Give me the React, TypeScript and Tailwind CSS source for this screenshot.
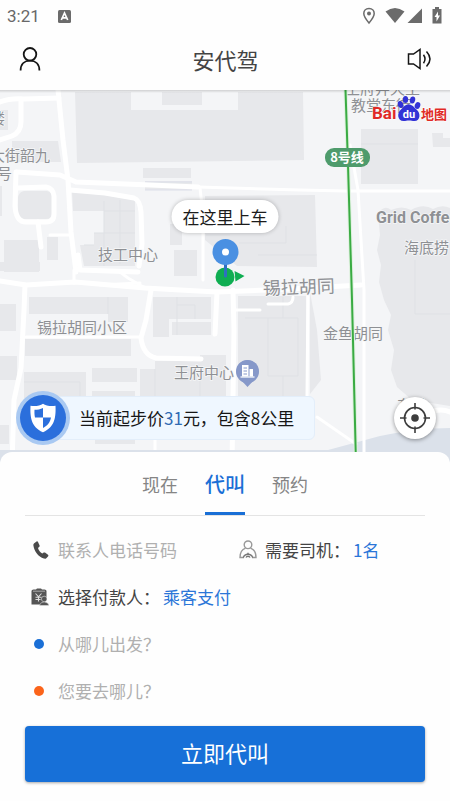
import { useState } from "react";

const tabs = ["现在", "代叫", "预约"];

const blocks = [
  "M75 92H131V110H238V92H303L304 160L77 163Z",
  "M162 92H202V105H162Z",
  "M0 110H8V130H0Z",
  "M12 141H58L61 162H12Z",
  "M143 168H191V178H143Z",
  "M145 181H192V190H145Z",
  "M24 191H47Q52 192 52 197V213Q52 219 46 219H24Q18 218 18 212V197Q19 192 24 191Z",
  "M4 240H39V272H4Z",
  "M47 237H58V260H47Z",
  "M0 186H2V216H0Z",
  "M72 192L104 195L135 200V266H84L80 245H94V233H104V211H73Z",
  "M170 224H182V245H170Z",
  "M174 250H197V276H174Z",
  "M205 196L315 195L317 267L237 266L205 240Z",
  "M361 129H418V184H361Z",
  "M432 133H443V138H450V147H433Z",
  "M0 262H40V271H0Z",
  "M29 297H128V322H108V314H29Z",
  "M25 339H131V356H25Z",
  "M0 304H16V331H0Z",
  "M0 356H17V380H0Z",
  "M24 372H86V398H24Z",
  "M92 368H137V382H92Z",
  "M92 391H135V400H92Z",
  "M0 425H9V444H0Z",
  "M95 440H135V444H95Z",
  "M153 297H211V319H169V337H153Z",
  "M172 322H211V335H172Z",
  "M140 369H155V361H200V355H226V396H140Z",
  "M238 296H306V396H238Z",
  "M310 292L317 330L321 380L310 394Z",
  "M378 214Q384 204 391 210Q402 205 411 210Q423 203 433 209Q442 204 450 208V406L412 400L397 387L391 370L394 350L388 330L391 315L384 300L379 282L381 265L377 250L380 235Z",
];

const outlines = [
  "M104 201V266M120 200V264M94 233H135M104 211H135M84 245H94",
  "M239 243H286V226M206 235H230M258 255H317",
  "M268 318H298V376H268ZM283 296V318M283 376V396M245 318H268",
  "M108 297V314M177 297V335M177 305H195V319M178 370H200V396M155 369V396",
  "M415 260V314H450M361 144H418M24 382H80V398",
];

const wideRoads = [
  "M0 102Q10 98 24 99L59 98",
  "M58 90L63 140L68 180L71 232L76 272",
  "M21 99V122Q21 132 12 136L0 140",
  "M17 172L60 175L76 182L150 185L198 187",
  "M16 172L15 206Q16 222 26 222H46Q54 222 54 214V196Q53 188 46 187L18 188",
  "M38 222L41 247",
  "M70 190L105 193L134 198Q140 200 141 212L142 244L139 266",
  "M78 255L80 270L138 272",
  "M0 281L26 285L75 282L145 288L180 290L217 292L290 289L361 285",
  "M25 285L24 310L21 368L14 400L12 464",
  "M151 290L146 320L141 338Q143 355 156 358L201 359",
  "M217 292L215 334",
  "M233 290L234 330L232 464",
];

const thinRoads = [
  "M198 187L300 190L345 191H450",
  "M50 235H70",
  "M200 188L203 215V280",
  "M350 145L358 190L361 240L364 290V464",
  "M26 337H141",
  "M234 310H260M268 304H288Q293 303 293 297",
  "M308 291L307 396",
  "M317 417L356 444",
  "M74 270V283M120 272L128 278L145 288M100 285L140 283",
  "M155 430V464",
];

const labelClass =
  "fill-[#8e9094] stroke-[#f6f7f8] [paint-order:stroke] font-['Noto_Sans_CJK_SC',sans-serif]";

function CityMap() {
  return (
    <svg
      className="absolute inset-0 h-full w-full"
      viewBox="0 90 450 374"
      preserveAspectRatio="xMidYMin slice"
      role="img"
      aria-label="地图"
    >
      <rect x="0" y="90" width="450" height="374" fill="#f4f5f7" />
      {blocks.map((d) => (
        <path key={d} d={d} fill="#e7e8eb" />
      ))}
      {outlines.map((d) => (
        <path key={d} d={d} fill="none" stroke="#dfe1e5" strokeWidth="1" />
      ))}
      <path d="M145 182H192M145 190H192" stroke="#dcdfea" />
      <path d="M0 450H328L380 436Q420 428 450 428V464H0Z" fill="#dbe1ea" />
      <g fill="none" stroke="#fff" strokeLinecap="round" strokeLinejoin="round">
        {wideRoads.map((d) => (
          <path key={d} d={d} strokeWidth="5" />
        ))}
        {thinRoads.map((d) => (
          <path key={d} d={d} strokeWidth="3" />
        ))}
        <path d="M430 412Q442 408 450 412" strokeWidth="5" />
      </g>
      <path d="M0 450H328V464H0Z" fill="#dbe1ea" />

      <g className={labelClass} fontSize="15" strokeWidth="1.500">
        <text x="-10" y="124">楼</text>
        <text x="-10" y="161">大街韶九</text>
        <text x="-3" y="179">号</text>
        <text x="98" y="260">技工中心</text>
        <text x="37" y="333">锡拉胡同小区</text>
        <text x="174" y="378">王府中心</text>
        <text x="323" y="339">金鱼胡同</text>
        <text x="404" y="253">海底捞</text>
        <text x="345" y="94">王府井天主</text>
        <text x="351" y="111">教堂东街</text>
        <text x="397" y="411">东单</text>
        <text x="263" y="295" fontSize="18" transform="rotate(-2 263 295)">
          锡拉胡同
        </text>
        <text x="376" y="223" fontSize="16" className="font-[Roboto,sans-serif] font-bold">
          Grid Coffee
        </text>
      </g>

      <path d="M345.500 90L348 165L352 300L356 464" fill="none" stroke="#dff1df" strokeWidth="4" />
      <path d="M345.500 90L348 165L352 300L356 464" fill="none" stroke="#3aab43" strokeWidth="2" />
      <rect x="325" y="148" width="45" height="19" rx="9" fill="#4e9b6c" />
      <text
        x="347"
        y="162"
        fontSize="13"
        textAnchor="middle"
        className="fill-white font-['Noto_Sans_CJK_SC',sans-serif] font-bold"
      >
        8号线
      </text>

      {/* 王府中心 office marker */}
      <path d="M247.500 387L241 380A11 11 0 1 1 254 380Z" fill="#8698c9" />
      <circle cx="247.500" cy="371.500" r="11.500" fill="#8698c9" />
      <path d="M242 365h6.500v11.500H242zM249.500 369h3.500v7.500H249.500z" fill="#fff" />
      <path d="M240.500 377h14" stroke="#fff" strokeWidth="1.200" />
      <path d="M243.500 368h3.500M243.500 371h3.500M243.500 374h3.500" stroke="#8698c9" />

      {/* Baidu map logo */}
      <g className="font-bold" stroke="#fff" strokeWidth="1" paintOrder="stroke">
        <text x="372" y="119" fontSize="17" className="fill-[#e02a26] font-[Roboto,sans-serif]">
          Bai
        </text>
        <text x="421" y="119" fontSize="13" className="fill-[#e02a26] font-['Noto_Sans_CJK_SC',sans-serif]">
          地图
        </text>
        <g fill="#3232d6" stroke="none">
          <path
            d="M408.500 104.500C404.500 104.500 404 107 401 109.500C396.500 113 397.500 121 403.500 121C406 121 406.500 120.500 409 120.500C411.500 120.500 412 121 414.500 121C420.500 121 421 113 416.500 109.500C413.500 107 412.500 104.500 408.500 104.500Z"
          />
          <ellipse cx="400.500" cy="104.500" rx="2.700" ry="3.500" transform="rotate(-15 400.500 104.500)" />
          <ellipse cx="405.500" cy="99.500" rx="2.700" ry="3.500" />
          <ellipse cx="412.500" cy="100" rx="2.700" ry="3.500" transform="rotate(12 412.500 100)" />
          <ellipse cx="417.500" cy="105.500" rx="2.700" ry="3.500" transform="rotate(20 417.500 105.500)" />
        </g>
        <text
          x="409"
          y="118"
          fontSize="11"
          textAnchor="middle"
          stroke="none"
          className="fill-white font-[Roboto,sans-serif]"
        >
          du
        </text>
      </g>
    </svg>
  );
}

function StatusBar() {
  return (
    <div className="flex h-8 items-center justify-between pr-2 pl-[7px] text-[#686868]">
      <div className="flex items-center gap-[18px]">
        <span className="font-[Roboto,sans-serif] text-[17px] leading-5">3:21</span>
        <svg width="13" height="13" viewBox="0 0 13 13" aria-hidden="true">
          <rect width="13" height="13" rx="1.500" fill="#6b6b6b" />
          <path d="M3.300 10L6.500 3L9.700 10M4.500 7.800H8.500" fill="none" stroke="#fff" strokeWidth="1.700" />
        </svg>
      </div>
      <svg width="80" height="18" viewBox="362 6 80 18" aria-hidden="true">
        <path
          d="M369 7.500C365.600 7.500 363.800 9.900 363.800 12.600C363.800 16 369 22 369 22S374.200 16 374.200 12.600C374.200 9.900 372.400 7.500 369 7.500Z"
          fill="none"
          stroke="#6b6b6b"
          strokeWidth="1.500"
        />
        <circle cx="369" cy="12.500" r="2" fill="#6b6b6b" />
        <path d="M385.500 10.500Q395 3.500 404.500 10.500L395 22Z" fill="#6b6b6b" />
        <path d="M422 7.500V22H407.500Z" fill="#6b6b6b" />
        <path d="M435 6h4v2h2.500v14.500h-9V8h2.500Z" fill="#6b6b6b" />
        <path d="M438 10.500L434.500 16H436.500V20.500L440 14.500H438Z" fill="#fff" />
      </svg>
    </div>
  );
}

function Header() {
  return (
    <header className="grid h-[58px] grid-cols-[1fr_auto_1fr] items-center pr-[17px] pb-1 pl-[18px]">
      <button type="button" aria-label="个人中心" className="justify-self-start">
        <svg width="24" height="26" viewBox="0 0 24 26" fill="none" stroke="#151515" strokeWidth="1.800" aria-hidden="true">
          <circle cx="12" cy="8.300" r="6.300" />
          <path d="M2.600 24.500C2.600 18 6.600 14.600 12 14.600S21.400 18 21.400 24.500" />
        </svg>
      </button>
      <h1 className="text-[22px] leading-8 text-[#444]">安代驾</h1>
      <button type="button" aria-label="语音播报" className="justify-self-end">
        <svg width="26" height="24" viewBox="0 0 26 24" fill="none" stroke="#151515" strokeWidth="1.500" aria-hidden="true">
          <path d="M1.500 7V17H6.500L13 21.500V2.500L6.500 7Z" />
          <path d="M16.500 7.800Q19.500 12 16.500 16.200M19.500 4.500Q26.500 12 19.500 19.500" />
        </svg>
      </button>
    </header>
  );
}

function PickupMarker() {
  return (
    <div className="absolute top-[110px] left-1/2 flex -translate-x-1/2 flex-col items-center">
      <div className="rounded-full bg-white px-[11px] py-1 text-[17px] leading-[25px] whitespace-nowrap text-[#1c1c1c] shadow-[0_0_4px_rgba(0,0,0,0.25)]">
        在这里上车
      </div>
      <svg className="mt-1" width="40" height="52" viewBox="205 238 40 52" aria-hidden="true">
        <circle cx="224.500" cy="278" r="9.500" fill="#0fae52" />
        <path d="M234 272L244 277L235 282.500Z" fill="#0fae52" />
        <path d="M225 260V277" stroke="#2f6fc2" strokeWidth="3" strokeLinecap="round" />
        <circle cx="225" cy="253" r="13" fill="#4a90e2" />
        <circle cx="225" cy="253" r="3.500" fill="#fff" />
      </svg>
    </div>
  );
}

function MapFooter() {
  return (
    <div className="absolute inset-x-0 bottom-[19px] flex items-center justify-between pr-[14px] pl-4">
      <div className="flex items-center">
        <span className="z-10 flex size-[54px] items-center justify-center rounded-full bg-[#a9c9f2]">
          <span className="flex size-[46px] items-center justify-center rounded-full bg-[#2b6fdc]">
            <svg width="28" height="30" viewBox="0 0 28 30" aria-hidden="true">
              <path d="M14 .8C11 3 6 3.500 1.500 2.800C1 14 2 24 14 29.300C26 24 27 14 26.500 2.800C22 3.500 17 3 14 .8Z" fill="#fff" />
              <path d="M14 5C11.500 6.300 8.500 6.800 5.500 6.800C5.400 9.500 5.400 12 6 14.500H14Z" fill="#2b6fdc" />
              <path d="M14 14.500H22C21 19.500 18.500 22.700 14 25Z" fill="#2b6fdc" />
            </svg>
          </span>
        </span>
        <p className="-ml-8 rounded-md border border-[#e3eefa] bg-[#eff7ff] py-2 pr-5 pl-10 text-[17px] leading-[26px] whitespace-nowrap text-[#161616]">
          当前起步价<span className="text-[#2f6bb3]">31</span>元，包含8公里
        </p>
      </div>
      <button
        type="button"
        aria-label="定位到当前位置"
        className="flex size-[42px] items-center justify-center rounded-full bg-white shadow-[0_1px_4px_rgba(0,0,0,0.4)]"
      >
        <svg width="30" height="30" viewBox="0 0 30 30" fill="none" stroke="#3d3d3d" strokeWidth="1.600" aria-hidden="true">
          <circle cx="15" cy="15" r="10.500" />
          <circle cx="15" cy="15" r="3.800" fill="#3d3d3d" stroke="none" />
          <path d="M15 0V6.500M15 23.500V30M0 15H6.500M23.500 15H30" />
        </svg>
      </button>
    </div>
  );
}

function PhoneIcon() {
  return (
    <svg className="ml-[2px]" width="16" height="18" viewBox="0 0 16 18" aria-hidden="true">
      <path
        d="M1.200 2.200L3.600 .5C4.200 .2 4.700 .4 5 1L6.600 4.400C6.800 4.900 6.700 5.300 6.300 5.700L5 6.900C5.700 9.200 7.200 11.200 9.300 12.500L10.700 11.600C11.200 11.300 11.600 11.300 12 11.600L15 13.800C15.500 14.200 15.600 14.700 15.200 15.200L13.300 17.200C12.600 17.800 11.800 17.900 10.900 17.600C5.200 15.500 1.300 10.600 .4 4.500C.3 3.500 .5 2.800 1.200 2.200Z"
        fill="#4a4a4a"
      />
    </svg>
  );
}

function PayerIcon() {
  return (
    <svg width="18" height="18" viewBox="0 0 18 18" aria-hidden="true">
      <path d="M.5 3Q.5 1.500 2.500 1.500H5L6 .5H10L11 1.500H13.500Q15.500 1.500 15.500 3V10L13 16.500H.5Z" fill="#555" />
      <path d="M2 3.200H14" stroke="#aaa" />
      <path d="M4.500 5.500L7.500 8.800L10.500 5.500M7.500 8.800V13.500M4.500 9.200H10.500M4.500 11.500H9.500" fill="none" stroke="#ddd" strokeWidth="1.100" />
      <circle cx="13.200" cy="11" r="2.800" fill="#555" stroke="#fff" strokeWidth=".5" />
      <path d="M8.500 17.500Q9 14 13.200 14T17.900 17.500Z" fill="#555" stroke="#fff" strokeWidth=".4" />
    </svg>
  );
}

function DriverIcon() {
  return (
    <svg
      className="shrink-0"
      width="18"
      height="19"
      viewBox="0 0 18 19"
      fill="none"
      stroke="#999"
      strokeWidth="1.400"
      aria-hidden="true"
    >
      <circle cx="9" cy="4.800" r="3.800" />
      <path d="M6.500 8.200C3 9.500 1 13 1 17.500H5M11.500 8.200C15 9.500 17 13 17 17.500H13" />
      <path d="M4.300 17.500A5 5 0 0 1 13.700 17.500" stroke="#777" />
      <path d="M7 17.500A2.200 2.200 0 0 1 11 17.500M9 12.800V15" stroke="#777" />
    </svg>
  );
}

const rowClass = "flex h-[47px] items-center";
const iconClass = "flex w-[33px] shrink-0 items-center pl-[6px]";
const inputClass =
  "w-full min-w-0 bg-transparent text-[17px] leading-6 text-[#333] outline-none placeholder:text-[#b0b0b0] placeholder:opacity-100";

export default function App() {
  const [active, setActive] = useState("代叫");

  return (
    <div lang="zh-CN" className="flex min-h-screen flex-col bg-[#fefefe] font-['Noto_Sans_CJK_SC',sans-serif]">
      <StatusBar />
      <Header />

      <section className="relative min-h-80 flex-1 overflow-hidden">
        <CityMap />
        <div className="absolute inset-x-0 top-0 h-[3px] bg-linear-to-b from-black/15 to-transparent" />
        <PickupMarker />
        <MapFooter />
      </section>

      <main className="relative -mt-3 rounded-t-xl bg-[#fefefe] px-[25px] pb-[19px]">
        <div role="tablist" className="flex h-16 justify-center gap-[27px] border-b border-[#e4e4e4]">
          {tabs.map((tab) => (
            <button
              key={tab}
              type="button"
              role="tab"
              aria-selected={tab === active}
              onClick={() => setActive(tab)}
              className={
                tab === active
                  ? "border-b-[3px] border-[#1a6fd6] pt-1 text-xl font-medium text-[#1a6fd6]"
                  : "border-b-[3px] border-transparent pt-1 text-lg text-[#858585]"
              }
            >
              {tab}
            </button>
          ))}
        </div>

        <form className="pt-[10px]" onSubmit={(event) => event.preventDefault()}>
          <div className={rowClass}>
            <label className="flex min-w-0 flex-1 items-center">
              <span className={iconClass}>
                <PhoneIcon />
              </span>
              <input type="tel" aria-label="联系人电话号码" placeholder="联系人电话号码" className={inputClass} />
            </label>
            <div className="flex w-[186px] shrink-0 items-center text-[17px] leading-6">
              <DriverIcon />
              <span className="pr-[3px] pl-2 text-[#444]">需要司机：</span>
              <button type="button" className="text-[#2b76d8]">
                1名
              </button>
            </div>
          </div>

          <div className="flex h-[47px] items-center text-[17px] leading-6">
            <span className={iconClass}>
              <PayerIcon />
            </span>
            <span className="pr-[3px] text-[#444]">选择付款人：</span>
            <button type="button" className="text-[#2b76d8]">
              乘客支付
            </button>
          </div>

          <label className={rowClass}>
            <span className={iconClass}>
              <span className="ml-[3px] size-[10px] rounded-full bg-[#1a6fd6]" />
            </span>
            <input type="text" aria-label="出发地" placeholder="从哪儿出发？" className={inputClass} />
          </label>

          <label className={rowClass}>
            <span className={iconClass}>
              <span className="ml-[3px] size-[10px] rounded-full bg-[#fb641b]" />
            </span>
            <input type="text" aria-label="目的地" placeholder="您要去哪儿？" className={inputClass} />
          </label>

          <button
            type="submit"
            className="mt-3 h-14 w-full rounded bg-[#1770d8] pb-[3px] text-[22px] text-white shadow-[0_1px_3px_rgba(0,0,0,0.35)]"
          >
            立即代叫
          </button>
        </form>
      </main>
    </div>
  );
}
